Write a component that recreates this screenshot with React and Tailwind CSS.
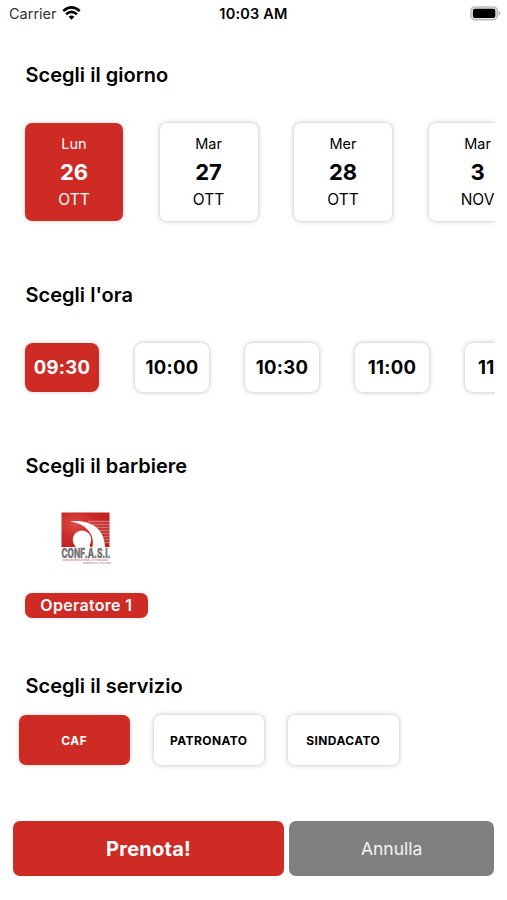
import { useState } from "react";

const days = [
  { weekday: "Lun", day: "26", month: "OTT" },
  { weekday: "Mar", day: "27", month: "OTT" },
  { weekday: "Mer", day: "28", month: "OTT" },
  { weekday: "Mar", day: "3", month: "NOV" },
];

const hours = ["09:30", "10:00", "10:30", "11:00", "11:30"];

const services = ["CAF", "PATRONATO", "SINDACATO"];

const cardStyle = (active) =>
  active
    ? "bg-[#ce2b25] text-white shadow-[0_0_5px_rgba(0,0,0,0.18)]"
    : "bg-white text-black shadow-[0_0_5px_rgba(0,0,0,0.28)]";

function WifiIcon() {
  return (
    <svg width="19" height="14" viewBox="0 0 19 14" fill="none" stroke="#000" strokeWidth="2.5">
      <path d="M1.2 5 Q9.5 -2.2 17.8 5" />
      <path d="M4.1 8.2 Q9.5 3.5 14.9 8.2" />
      <path d="M9.5 13.7 L6.6 10.8 Q9.5 8.4 12.4 10.8 Z" fill="#000" stroke="none" />
    </svg>
  );
}

function BatteryIcon() {
  return (
    <svg width="31" height="15" viewBox="0 0 31 15">
      <rect x="0.9" y="0.9" width="26.4" height="12.8" rx="4" fill="#e4e4e4" stroke="#bdbdbd" strokeWidth="1.5" />
      <rect x="2.9" y="2.7" width="22.4" height="9.2" rx="2" fill="#000" />
      <path d="M28.5 5 Q30.6 5.8 30.6 7.3 Q30.6 8.8 28.5 9.6 Z" fill="#b9b9b9" />
    </svg>
  );
}

function Logo() {
  return (
    <svg className="ml-[1.5px] overflow-visible" width="52" height="53" viewBox="0 0 52 53">
      <defs>
        <radialGradient id="logoRed" cx="0.3" cy="0.35" r="0.8">
          <stop offset="0" stopColor="#dc4a45" />
          <stop offset="0.5" stopColor="#c92a27" />
          <stop offset="1" stopColor="#bd1f1e" />
        </radialGradient>
      </defs>
      <rect x="0.5" y="0.5" width="48" height="34.5" fill="url(#logoRed)" />
      <g stroke="#fff" strokeWidth="1.6" opacity="0.35">
        <path d="M27 9.5 H48.5 M31 12.5 H48.5 M34 15.5 H48.5 M37 18.5 H48.5 M39 21.5 H48.5 M41 24.5 H48.5 M42 27.5 H48.5 M43 30.5 H48.5" />
      </g>
      <path d="M9 9.5 C27 7 43.5 15 44 35 H31.5 C34 23 26 12 9 9.5 Z" fill="#fff" />
      <circle cx="21" cy="27.8" r="9.3" fill="#fff" />
      <path d="M14 32 H28 L29.5 35.5 H15 Z" fill="#fff" />
      <text x="0.5" y="46" textLength="49" lengthAdjust="spacingAndGlyphs" fontSize="12.5" fontWeight="800" fill="#757575" stroke="#757575" strokeWidth="0.4">
        CONF.A.S.I.
      </text>
      <text x="1.5" y="48.9" textLength="46" lengthAdjust="spacingAndGlyphs" fontSize="2.4" fill="#cf4e4c">
        CONFEDERAZIONE AUTONOMA
      </text>
      <text x="22" y="51.7" textLength="28" lengthAdjust="spacingAndGlyphs" fontSize="2.4" fill="#a8605f">
        SINDACATI ITALIANI
      </text>
    </svg>
  );
}

function SectionTitle({ children }) {
  return <h2 className="h-7 pl-[25.5px] text-xl leading-7 font-semibold tracking-[0.02px]">{children}</h2>;
}

export default function App() {
  const [day, setDay] = useState(0);
  const [hour, setHour] = useState(0);
  const [service, setService] = useState(0);

  return (
    <div className="flex h-[900px] w-[507px] flex-col overflow-hidden bg-white font-['Inter',sans-serif] text-black">
      {/* Status bar */}
      <div className="grid h-7 shrink-0 grid-cols-3 items-center pr-1.5 pl-[9px] text-[14.5px]">
        <div className="flex items-center gap-[5px] text-[#333]">
          <span>Carrier</span>
          <span className="-mt-0.5">
            <WifiIcon />
          </span>
        </div>
        <span className="pr-[3px] text-center font-semibold tracking-[0.2px]">10:03 AM</span>
        <div className="-mt-0.5 flex justify-end">
          <BatteryIcon />
        </div>
      </div>

      {/* Day */}
      <section className="mt-[33px]">
        <SectionTitle>Scegli il giorno</SectionTitle>
        <div className="mr-3 flex gap-[36.5px] overflow-hidden pt-[34px] pb-3 pl-[25px]">
          {days.map((d, i) => (
            <button
              key={i}
              onClick={() => setDay(i)}
              className={`flex h-[98px] w-[98px] shrink-0 flex-col items-center rounded-[7px] pt-2.5 ${cardStyle(day === i)}`}
            >
              <span className="text-[14.5px] leading-[22px]">{d.weekday}</span>
              <span className="text-[22px] leading-[34px] font-bold">{d.day}</span>
              <span className="text-[15.5px] leading-[22px]">{d.month}</span>
            </button>
          ))}
        </div>
      </section>

      {/* Hour */}
      <section className="mt-12">
        <SectionTitle>Scegli l'ora</SectionTitle>
        <div className="mr-3 flex gap-9 overflow-hidden pt-[34px] pb-3 pl-[25px]">
          {hours.map((h, i) => (
            <button
              key={h}
              onClick={() => setHour(i)}
              className={`h-[49px] w-[74px] shrink-0 rounded-lg pt-px text-[18.5px] font-bold tracking-[0.3px] ${cardStyle(hour === i)}`}
            >
              {h}
            </button>
          ))}
        </div>
      </section>

      {/* Barber */}
      <section className="mt-12">
        <SectionTitle>Scegli il barbiere</SectionTitle>
        <div className="mt-8 ml-[25px] flex w-[122.5px] flex-col items-center">
          <Logo />
          <button className="mt-7 h-[25px] w-full rounded-[7px] bg-[#ce2b25] text-base leading-[25px] font-semibold tracking-[0.3px] text-white shadow-[0_0_5px_rgba(0,0,0,0.1)]">
            Operatore 1
          </button>
        </div>
      </section>

      {/* Service */}
      <section className="mt-[54px]">
        <SectionTitle>Scegli il servizio</SectionTitle>
        <div className="mt-[15px] flex gap-6 pl-[19px]">
          {services.map((s, i) => (
            <button
              key={s}
              onClick={() => setService(i)}
              className={`h-[50px] w-[110.5px] rounded-[7px] pt-px text-xs font-bold tracking-[0.4px] ${cardStyle(service === i)}`}
            >
              {s}
            </button>
          ))}
        </div>
      </section>

      <div className="mt-14 flex gap-[5px] px-[13px]">
        <button className="h-[55px] w-[271.5px] rounded-[7px] bg-[#ce2b25] text-xl font-bold tracking-[0.25px] text-white">Prenota!</button>
        <button className="h-[55px] w-[205px] rounded-[7px] bg-[#808080] pt-0.5 text-[17.5px] text-white/90">Annulla</button>
      </div>
    </div>
  );
}
